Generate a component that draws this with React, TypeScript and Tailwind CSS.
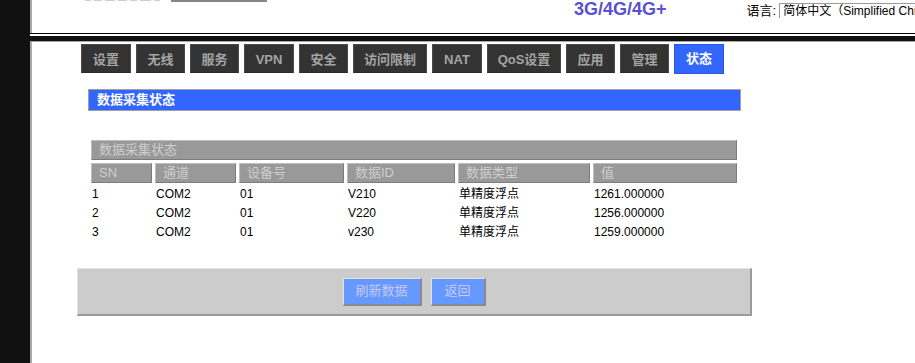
import React from "react";

const tabs: { label: string; w: string; active?: boolean }[] = [
  { label: "设置", w: "w-[50px]" },
  { label: "无线", w: "w-[49px]" },
  { label: "服务", w: "w-[49px]" },
  { label: "VPN", w: "w-[50px]" },
  { label: "安全", w: "w-[49px]" },
  { label: "访问限制", w: "w-[74px]" },
  { label: "NAT", w: "w-[50px]" },
  { label: "QoS设置", w: "w-[74px]" },
  { label: "应用", w: "w-[49px]" },
  { label: "管理", w: "w-[49px]" },
  { label: "状态", w: "w-[50px]", active: true },
];

const rows = [
  ["1", "COM2", "01", "V210", "单精度浮点", "1261.000000"],
  ["2", "COM2", "01", "V220", "单精度浮点", "1256.000000"],
  ["3", "COM2", "01", "v230", "单精度浮点", "1259.000000"],
];

const heads = ["SN", "通道", "设备号", "数据ID", "数据类型", "值"];
const colW = [61, 81, 105, 108, 132, 144];

export default function App() {
  return (
    <div className="w-[915px] h-[363px] overflow-hidden bg-[#111111] flex font-['Liberation_Sans','Noto_Sans_CJK_SC',sans-serif]">
      <div className="w-[30px] shrink-0" />
      <div className="flex-1 min-w-0 flex flex-col">
        {/* top header */}
        <div className="h-[33px] shrink-0 bg-white border-l-2 border-[#a8a8a8] flex items-start overflow-hidden">
          <div className="ml-[53px] w-[182px] h-[2px] flex items-start gap-[3px]">
            <div className="w-[6px] h-px bg-[#cfcfcf]" />
            <div className="w-[8px] h-px bg-[#cfcfcf]" />
            <div className="w-[10px] h-px bg-[#cfcfcf]" />
            <div className="w-[9px] h-px bg-[#cfcfcf]" />
            <div className="w-[7px] h-px bg-[#cfcfcf]" />
            <div className="w-[11px] h-px bg-[#cfcfcf]" />
            <div className="w-[6px] h-px bg-[#cfcfcf]" />
            <div className="ml-[8px] w-[97px] h-[2px] bg-[#8a8585]" />
          </div>
          <div className="ml-[307px] text-[18px] leading-[18px] font-bold text-[#5a50d2] whitespace-nowrap">
            3G/4G/4G+
          </div>
          <div className="ml-[80px] mt-[3px] text-[13px] leading-[15px] text-black whitespace-nowrap">
            语言:
          </div>
          <div className="ml-[3px] mt-[3px] h-[15px] w-[140px] shrink-0 border-t border-l border-[#9a9a9a] pl-[3px] text-[12px] leading-[14px] text-black whitespace-nowrap overflow-hidden">
            简体中文（Simplified Chi
          </div>
        </div>
        <div className="h-px shrink-0 bg-black" />
        <div className="h-[2px] shrink-0 bg-white" />
        <div className="h-[5px] shrink-0 bg-[#111111]" />

        {/* main panel */}
        <div className="flex-1 bg-white border-t border-l-2 border-[#a8a8a8]">
          {/* tabs */}
          <div className="flex gap-[5px] pl-[49px] pt-[2px]">
            {tabs.map((t) => (
              <div
                key={t.label}
                className={
                  t.active
                    ? `${t.w} h-[30px] flex items-center justify-center bg-[#3366ff] border border-[#2a55dd] text-white text-[13px] font-bold`
                    : `${t.w} h-[29px] flex items-center justify-center pt-[2px] bg-[#333333] border border-[#4a4a4a] border-b-[#2a2a2a] text-[#a4a4a4] text-[13px] font-bold`
                }
              >
                {t.label}
              </div>
            ))}
          </div>

          {/* title bar */}
          <div className="ml-[56px] mt-[15px] w-[653px] h-[22px] bg-[#3366ff] border border-[#a0a0a0] flex items-center pl-[8px] text-white text-[13px] font-bold">
            数据采集状态
          </div>

          {/* table */}
          <table className="ml-[56px] mt-[26px] w-[652px] table-fixed border-separate border-spacing-[3px]">
            <colgroup>
              {colW.map((w, i) => (
                <col key={i} style={{ width: w }} />
              ))}
            </colgroup>
            <tbody>
              <tr>
                <td
                  colSpan={6}
                  className="p-0 pl-[7px] h-[20px] leading-[18px] bg-[#999999] border-t border-l border-[#bdbdbd] border-b border-r border-b-[#7c7c7c] border-r-[#7c7c7c] text-[13px] text-[#cfcfcf]"
                >
                  数据采集状态
                </td>
              </tr>
              <tr>
                {heads.map((h) => (
                  <td
                    key={h}
                    className="p-0 pl-[7px] h-[20px] leading-[18px] bg-[#999999] border-t border-l border-[#bdbdbd] border-b border-r border-b-[#7c7c7c] border-r-[#7c7c7c] text-[13px] text-[#cfcfcf] whitespace-nowrap"
                  >
                    {h}
                  </td>
                ))}
              </tr>
              {rows.map((r, i) => (
                <tr key={i}>
                  {r.map((c, j) => (
                    <td
                      key={j}
                      className="p-0 pl-px h-[16px] leading-[16px] text-[12px] text-black whitespace-nowrap"
                    >
                      {c}
                    </td>
                  ))}
                </tr>
              ))}
            </tbody>
          </table>

          {/* button bar */}
          <div className="ml-[45px] mt-[25px] w-[675px] h-[48px] bg-[#cccccc] border-t border-l border-[#e2e2e2] border-r-2 border-b-2 border-r-[#9a9a9a] border-b-[#9a9a9a] flex items-center justify-center gap-[9px]">
            <div className="w-[79px] h-[28px] bg-[#6699ff] border-t border-l border-[#e4e4e4] border-r-2 border-b-2 border-r-[#8a8a8a] border-b-[#8a8a8a] flex items-center justify-center text-[13px] text-[#c8c8f4]">
              刷新数据
            </div>
            <div className="w-[55px] h-[28px] bg-[#6699ff] border-t border-l border-[#e4e4e4] border-r-2 border-b-2 border-r-[#8a8a8a] border-b-[#8a8a8a] flex items-center justify-center text-[13px] text-[#c8c8f4]">
              返回
            </div>
          </div>
        </div>
      </div>
    </div>
  );
}
